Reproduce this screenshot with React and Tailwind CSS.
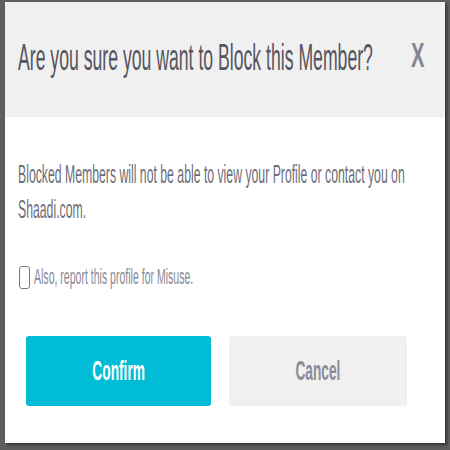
import React, { useState } from "react";

const App = () => {
  const [report, setReport] = useState(false);

  return (
    <div className="w-[450px] h-[450px] bg-[#5e5e5e] overflow-hidden pl-[5px] pt-[2px] font-['Liberation_Sans',Arial,sans-serif]">
      {/* Modal */}
      <div className="w-[440px] h-[441px] bg-white flex flex-col overflow-hidden shadow-[2px_2px_3px_rgba(0,0,0,0.45)]">
        {/* Header */}
        <div className="h-[115px] bg-[#f0f0f0] flex items-start pl-[13px] pr-[20px] pt-[38px]">
          <div className="flex-1 min-w-0">
            <h2 className="inline-block whitespace-nowrap text-[36px] leading-[36px] text-[#555560] scale-x-[0.49] origin-left">
              Are you sure you want to Block this Member?
            </h2>
          </div>
          <button className="w-[14px] -mt-[3px] flex justify-center">
            <span className="inline-block text-[35px] leading-[36px] font-bold text-[#85858f] scale-x-[0.58]">
              X
            </span>
          </button>
        </div>

        {/* Body */}
        <div className="flex flex-col pl-[13px] pt-[40px]">
          <p className="w-[820px] text-[25px] leading-[35px] text-[#6e6e7a] scale-x-[0.49] origin-left">
            Blocked Members will not be able to view your Profile or contact you on Shaadi.com.
          </p>

          {/* Report checkbox */}
          <label className="mt-[39px] flex items-start gap-[4px] cursor-pointer">
            <span
              onClick={() => setReport(!report)}
              className={`ml-[1px] shrink-0 w-[11px] h-[23px] border-[1.5px] border-[#77777f] rounded-[3px] ${report ? "bg-[#00bcd4]" : "bg-white"}`}
            />
            <span className="inline-block whitespace-nowrap text-[21.5px] leading-[23px] text-[#8a8a96] scale-x-[0.49] origin-left">
              Also, report this profile for Misuse.
            </span>
          </label>

          {/* Actions */}
          <div className="mt-[47px] ml-[8px] flex gap-[18px]">
            <button className="w-[185px] h-[70px] rounded-[3px] bg-[#00bcd4] flex items-center justify-center">
              <span className="inline-block text-[28px] font-bold text-white scale-x-[0.49]">
                Confirm
              </span>
            </button>
            <button className="w-[178px] h-[70px] rounded-[3px] bg-[#f0f0f0] flex items-center justify-center">
              <span className="inline-block text-[28px] font-bold text-[#8c8c99] scale-x-[0.49]">
                Cancel
              </span>
            </button>
          </div>
        </div>
      </div>
    </div>
  );
};

export default App;
